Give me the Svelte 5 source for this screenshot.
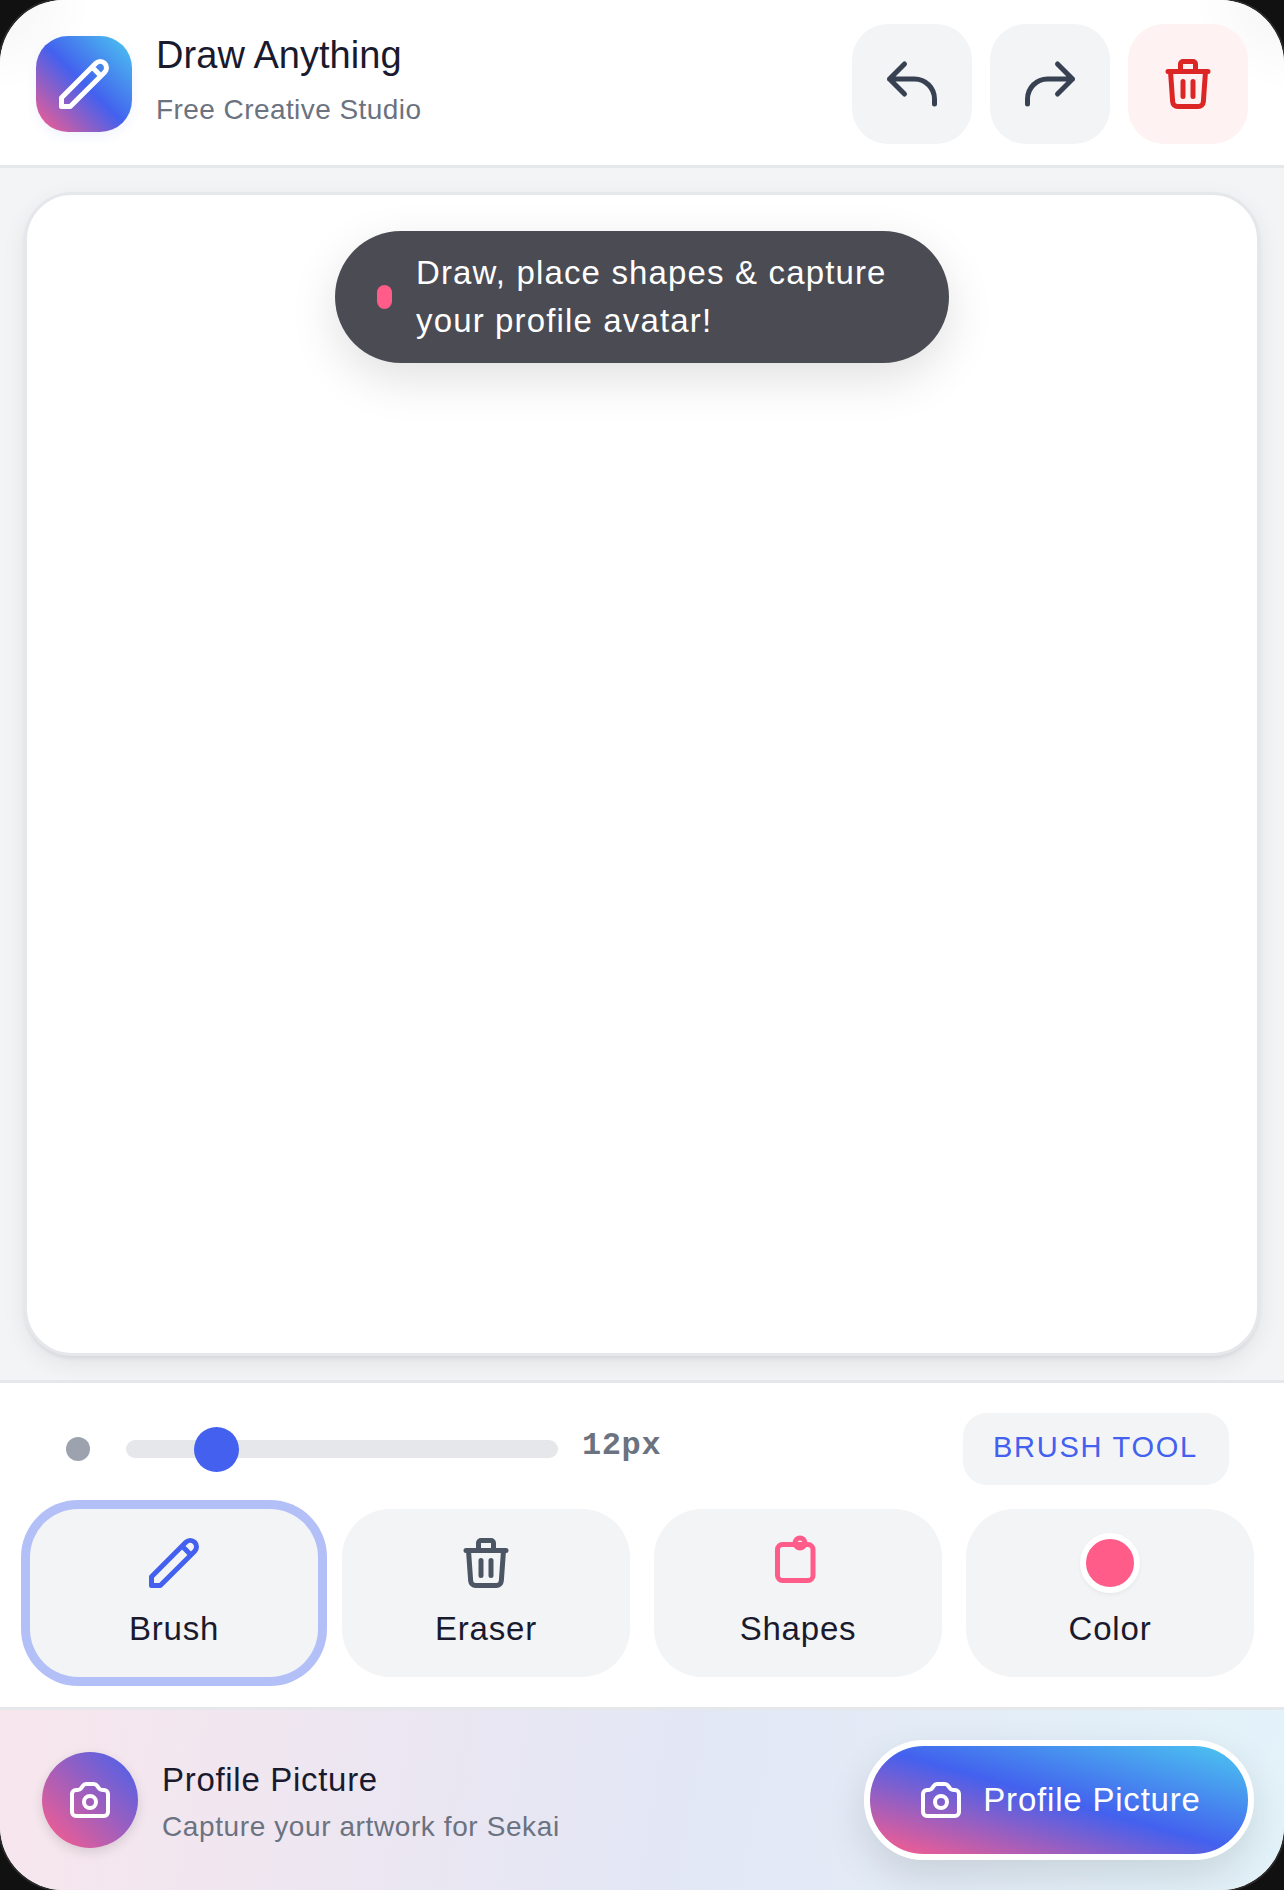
<script>
  const pencil = ["M15.232 5.232l3.536 3.536m-2.036-5.036a2.5 2.5 0 113.536 3.536L6.5 21.036H3v-3.572L16.732 3.732z"];
  const trash = ["M19 7l-.867 12.142A2 2 0 0116.138 21H7.862a2 2 0 01-1.995-1.858L5 7m5 4v6m4-6v6m1-10V4a1 1 0 00-1-1h-4a1 1 0 00-1 1v3M4 7h16"];
  const camera = ["M3 9a2 2 0 012-2h.93a2 2 0 001.664-.89l.812-1.22A2 2 0 0110.07 4h3.86a2 2 0 011.664.89l.812 1.22A2 2 0 0018.07 7H19a2 2 0 012 2v9a2 2 0 01-2 2H5a2 2 0 01-2-2V9z", "M15 13a3 3 0 11-6 0 3 3 0 016 0z"];
  const undo = ["M3 10h10a8 8 0 018 8v2M3 10l6 6m-6-6l6-6"];
  const redo = ["M21 10H11a8 8 0 00-8 8v2m18-10l-6 6m6-6l-6-6"];
</script>

{#snippet icon(paths, cls)}
  <svg class={cls} viewBox="0 0 24 24" fill="none" stroke="currentColor" stroke-width="2" stroke-linecap="round" stroke-linejoin="round">
    {#each paths as d}<path {d} />{/each}
  </svg>
{/snippet}

<div class="frame">
  <header class="top">
    <div class="logo">{@render icon(pencil, "i60")}</div>
    <div class="heading">
      <div class="title">Draw Anything</div>
      <div class="sub">Free Creative Studio</div>
    </div>
    <div class="actions">
      <button class="act">{@render icon(undo, "i60")}</button>
      <button class="act">{@render icon(redo, "i60")}</button>
      <button class="act danger">{@render icon(trash, "i60")}</button>
    </div>
  </header>

  <main class="stage">
    <div class="canvas">
      <div class="toast">
        <span class="dot"></span>
        <span class="msg">Draw, place shapes &amp; capture your profile avatar!</span>
      </div>
    </div>
  </main>

  <section class="tools">
    <div class="size-row">
      <span class="size-dot"></span>
      <div class="track"><span class="thumb"></span></div>
      <span class="size">12px</span>
      <span class="badge">BRUSH TOOL</span>
    </div>
    <div class="tool-grid">
      <button class="tool active">
        <span class="blue">{@render icon(pencil, "i60")}</span>
        <span class="label">Brush</span>
      </button>
      <button class="tool">
        <span class="slate">{@render icon(trash, "i60")}</span>
        <span class="label">Eraser</span>
      </button>
      <button class="tool">
        <svg class="i60 pink" viewBox="0 0 24 24" fill="none" stroke="currentColor" stroke-width="2" stroke-linejoin="round">
          <rect x="3.8" y="4.6" width="14.2" height="14.4" rx="2" />
          <circle cx="12.8" cy="4" r="2" />
        </svg>
        <span class="label">Shapes</span>
      </button>
      <button class="tool">
        <span class="swatch"></span>
        <span class="label">Color</span>
      </button>
    </div>
  </section>

  <footer class="capture">
    <div class="cam">{@render icon(camera, "i48")}</div>
    <div class="cap-text">
      <div class="cap-title">Profile Picture</div>
      <div class="cap-sub">Capture your artwork for Sekai</div>
    </div>
    <button class="cta">{@render icon(camera, "i48")}<span>Profile Picture</span></button>
  </footer>
</div>

<style>
  :global(body) { margin: 0; background: #111; }
  * { box-sizing: border-box; }
  button { border: 0; padding: 0; margin: 0; font: inherit; cursor: pointer; }
  .frame {
    width: 1284px; height: 1890px; display: flex; flex-direction: column;
    border-radius: 64px; overflow: hidden; background: #fff;
    font-family: "Liberation Sans", Arial, sans-serif; color: #1a1a2e;
    box-shadow: 0 0 0 2px #2a2a2a;
  }
  .i60 { width: 60px; height: 60px; display: block; }
  .i48 { width: 48px; height: 48px; display: block; }

  .top {
    display: flex; align-items: center; height: 168px; padding: 24px 36px 21px;
    border-bottom: 3px solid #e5e7eb; flex: none;
    background:
      radial-gradient(circle at 0 0, rgba(0, 0, 0, .04), transparent 90px),
      radial-gradient(circle at 100% 0, rgba(0, 0, 0, .04), transparent 90px),
      #fff;
  }
  .logo {
    width: 96px; height: 96px; border-radius: 32px; color: #fff;
    display: flex; align-items: center; justify-content: center;
    background: linear-gradient(to top right, #ff5c8a, #4361ee 50%, #4cc9f0);
    box-shadow: 0 4px 12px rgba(67, 97, 238, .08);
  }
  .heading { margin-left: 24px; margin-top: -9px; }
  .title { font-size: 38px; line-height: 48px; letter-spacing: .05px; }
  .sub { font-size: 28px; line-height: 36px; margin-top: 13px; letter-spacing: .43px; color: #6b7280; }
  .actions { margin-left: auto; display: flex; gap: 18px; }
  .act {
    width: 120px; height: 120px; border-radius: 36px; background: #f3f4f6; color: #374151;
    display: flex; align-items: center; justify-content: center;
  }
  .act.danger { background: #fef2f2; color: #dc2626; }

  .stage { flex: 1; background: #f3f4f6; padding: 24px; display: flex; min-height: 0; }
  .canvas {
    flex: 1; position: relative; background: #fff; border: 3px solid #e5e7eb; border-radius: 48px;
    box-shadow: 0 8px 24px rgba(0, 0, 0, .07), 0 3px 4px -1px rgba(0, 0, 0, .08);
  }
  .toast {
    position: absolute; top: 36px; left: 308px; width: 614px; height: 132px;
    border-radius: 66px; background: #4a4b53; color: #fff;
    display: flex; align-items: center; gap: 24px; padding: 0 42px;
    box-shadow: 0 16px 48px rgba(0, 0, 0, .12);
  }
  .dot { width: 15px; height: 24px; border-radius: 8px; background: #ff5c8a; flex: none; }
  .msg { font-size: 33px; line-height: 48px; letter-spacing: 1.15px; }

  .tools { flex: none; height: 327px; border-top: 3px solid #e5e7eb; padding: 30px 30px 0; background: #fff; }
  .size-row { display: flex; align-items: center; height: 72px; padding: 0 25px 0 36px; }
  .size-dot { width: 24px; height: 24px; border-radius: 50%; background: #9ca3af; flex: none; }
  .track { position: relative; width: 432px; height: 18px; margin: 0 24px 0 36px; border-radius: 9px; background: #e5e7eb; flex: none; }
  .thumb { position: absolute; left: 68px; top: -13.5px; width: 45px; height: 45px; border-radius: 50%; background: #4361ee; }
  .size { font-family: "Liberation Mono", monospace; font-weight: 700; font-size: 32px; line-height: 40px; letter-spacing: .6px; color: #6b7280; margin-bottom: 6px; }
  .badge {
    margin-left: auto; height: 72px; padding: 0 31px 4px 30px; border-radius: 24px; background: #f3f4f6; color: #4361ee;
    font-size: 29px; letter-spacing: 1.75px; display: flex; align-items: center;
  }
  .tool-grid { display: grid; grid-template-columns: repeat(4, 288px); gap: 24px; margin-top: 24px; }
  .tool {
    height: 168px; border-radius: 48px; background: #f3f4f6; padding-top: 24px;
    display: flex; flex-direction: column; align-items: center; color: #1a1a2e;
  }
  .tool.active { box-shadow: 0 0 0 9px #b3c0f8; }
  .label { font-size: 33px; line-height: 40px; margin-top: 16px; letter-spacing: .8px; }
  .blue { color: #4361ee; }
  .slate { color: #4b5563; }
  .pink { color: #ff5c8a; }
  .swatch {
    display: block; width: 60px; height: 60px; border-radius: 50%; background: #ff5c8a; border: 6px solid #fff;
    box-shadow: 0 2px 4px rgba(0, 0, 0, .05);
  }

  .capture {
    flex: none; height: 183px; display: flex; align-items: center; padding: 0 30px 0 42px; border-top: 3px solid #e5e7eb;
    background: linear-gradient(100deg, #f8e6ed, #e3e7f5 52%, #e3f3fa);
  }
  .cam {
    width: 96px; height: 96px; border-radius: 50%; color: #fff; flex: none;
    display: flex; align-items: center; justify-content: center;
    background: linear-gradient(to top right, #ff5c8a, #4361ee);
    box-shadow: 0 4px 12px rgba(0, 0, 0, .12);
  }
  .cap-text { margin-left: 24px; padding-top: 4px; }
  .cap-title { font-size: 33px; line-height: 40px; letter-spacing: .7px; }
  .cap-sub { font-size: 28px; line-height: 36px; margin-top: 9px; letter-spacing: .6px; color: #6b7280; }
  .cta {
    margin-left: auto; width: 390px; height: 120px; border-radius: 60px; border: 6px solid #fff; color: #fff;
    display: flex; align-items: center; justify-content: center; gap: 18px;
    background: linear-gradient(to top right, #ff5c8a, #4361ee 50%, #4cc9f0);
    box-shadow: 0 16px 40px rgba(0, 0, 0, .12);
    font-size: 33px; letter-spacing: .8px;
  }
</style>
